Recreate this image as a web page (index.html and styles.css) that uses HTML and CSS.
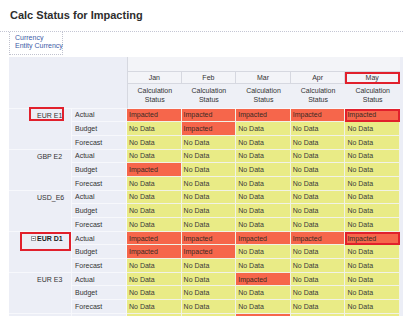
FILE: index.html
```html
<!DOCTYPE html>
<html lang="en">
<head>
  <meta charset="UTF-8">
  <meta name="viewport" content="width=device-width, initial-scale=1.0">
  <title>Calc Status for Impacting</title>
  <link rel="stylesheet" href="styles.css">
</head>
<body>
  <h1 class="page-title">Calc Status for Impacting</h1>

  <div class="pov-bar">
    <div class="pov-panel">
      <div>Currency</div>
      <div>Entity Currency</div>
    </div>
  </div>

  <div class="grid-wrap">
    <table class="grid">
      <colgroup>
        <col class="col-entity">
        <col class="col-scenario">
        <col class="col-month">
        <col class="col-month">
        <col class="col-month">
        <col class="col-month">
        <col class="col-month">
      </colgroup>
      <thead>
        <tr class="row-blank">
          <th class="corner" colspan="2" rowspan="3"></th>
          <th class="hd-blank" colspan="5"></th>
        </tr>
        <tr class="row-month">
          <th class="hd-month">Jan</th>
          <th class="hd-month">Feb</th>
          <th class="hd-month">Mar</th>
          <th class="hd-month">Apr</th>
          <th class="hd-month flagged">May</th>
        </tr>
        <tr class="row-measure">
          <th class="hd-measure">Calculation<br>Status</th>
          <th class="hd-measure">Calculation<br>Status</th>
          <th class="hd-measure">Calculation<br>Status</th>
          <th class="hd-measure">Calculation<br>Status</th>
          <th class="hd-measure">Calculation<br>Status</th>
        </tr>
      </thead>
      <tbody>
        <!-- EUR E1 -->
        <tr>
          <td class="entity" rowspan="3"><span class="entity-label mark-e1"><span class="tree-slot"></span>EUR E1</span></td>
          <td class="scenario">Actual</td>
          <td class="cell impacted">Impacted</td>
          <td class="cell impacted">Impacted</td>
          <td class="cell impacted">Impacted</td>
          <td class="cell impacted">Impacted</td>
          <td class="cell impacted flagged">Impacted</td>
        </tr>
        <tr>
          <td class="scenario">Budget</td>
          <td class="cell nodata">No Data</td>
          <td class="cell impacted">Impacted</td>
          <td class="cell nodata">No Data</td>
          <td class="cell nodata">No Data</td>
          <td class="cell nodata">No Data</td>
        </tr>
        <tr>
          <td class="scenario">Forecast</td>
          <td class="cell nodata">No Data</td>
          <td class="cell nodata">No Data</td>
          <td class="cell nodata">No Data</td>
          <td class="cell nodata">No Data</td>
          <td class="cell nodata">No Data</td>
        </tr>

        <!-- GBP E2 -->
        <tr>
          <td class="entity" rowspan="3"><span class="entity-label"><span class="tree-slot"></span>GBP E2</span></td>
          <td class="scenario">Actual</td>
          <td class="cell nodata">No Data</td>
          <td class="cell nodata">No Data</td>
          <td class="cell nodata">No Data</td>
          <td class="cell nodata">No Data</td>
          <td class="cell nodata">No Data</td>
        </tr>
        <tr>
          <td class="scenario">Budget</td>
          <td class="cell impacted">Impacted</td>
          <td class="cell nodata">No Data</td>
          <td class="cell nodata">No Data</td>
          <td class="cell nodata">No Data</td>
          <td class="cell nodata">No Data</td>
        </tr>
        <tr>
          <td class="scenario">Forecast</td>
          <td class="cell nodata">No Data</td>
          <td class="cell nodata">No Data</td>
          <td class="cell nodata">No Data</td>
          <td class="cell nodata">No Data</td>
          <td class="cell nodata">No Data</td>
        </tr>

        <!-- USD_E6 -->
        <tr>
          <td class="entity" rowspan="3"><span class="entity-label"><span class="tree-slot"></span>USD_E6</span></td>
          <td class="scenario">Actual</td>
          <td class="cell nodata">No Data</td>
          <td class="cell nodata">No Data</td>
          <td class="cell nodata">No Data</td>
          <td class="cell nodata">No Data</td>
          <td class="cell nodata">No Data</td>
        </tr>
        <tr>
          <td class="scenario">Budget</td>
          <td class="cell nodata">No Data</td>
          <td class="cell nodata">No Data</td>
          <td class="cell nodata">No Data</td>
          <td class="cell nodata">No Data</td>
          <td class="cell nodata">No Data</td>
        </tr>
        <tr>
          <td class="scenario">Forecast</td>
          <td class="cell nodata">No Data</td>
          <td class="cell nodata">No Data</td>
          <td class="cell nodata">No Data</td>
          <td class="cell nodata">No Data</td>
          <td class="cell nodata">No Data</td>
        </tr>

        <!-- EUR D1 (expanded parent) -->
        <tr>
          <td class="entity" rowspan="3"><span class="entity-label parent mark-d1"><span class="tree-slot"><svg width="5" height="5" viewBox="0 0 5 5"><rect x="0.5" y="0.5" width="4" height="4" fill="#fff" stroke="#9a9ca6"/><path d="M1.5 2.5h2" stroke="#55575f"/></svg></span>EUR D1</span></td>
          <td class="scenario">Actual</td>
          <td class="cell impacted">Impacted</td>
          <td class="cell impacted">Impacted</td>
          <td class="cell impacted">Impacted</td>
          <td class="cell impacted">Impacted</td>
          <td class="cell impacted flagged">Impacted</td>
        </tr>
        <tr>
          <td class="scenario">Budget</td>
          <td class="cell impacted">Impacted</td>
          <td class="cell impacted">Impacted</td>
          <td class="cell nodata">No Data</td>
          <td class="cell nodata">No Data</td>
          <td class="cell nodata">No Data</td>
        </tr>
        <tr>
          <td class="scenario">Forecast</td>
          <td class="cell nodata">No Data</td>
          <td class="cell nodata">No Data</td>
          <td class="cell nodata">No Data</td>
          <td class="cell nodata">No Data</td>
          <td class="cell nodata">No Data</td>
        </tr>

        <!-- EUR E3 -->
        <tr>
          <td class="entity" rowspan="3"><span class="entity-label"><span class="tree-slot"></span>EUR E3</span></td>
          <td class="scenario">Actual</td>
          <td class="cell nodata">No Data</td>
          <td class="cell nodata">No Data</td>
          <td class="cell impacted">Impacted</td>
          <td class="cell nodata">No Data</td>
          <td class="cell nodata">No Data</td>
        </tr>
        <tr>
          <td class="scenario">Budget</td>
          <td class="cell nodata">No Data</td>
          <td class="cell nodata">No Data</td>
          <td class="cell nodata">No Data</td>
          <td class="cell nodata">No Data</td>
          <td class="cell nodata">No Data</td>
        </tr>
        <tr>
          <td class="scenario">Forecast</td>
          <td class="cell nodata">No Data</td>
          <td class="cell nodata">No Data</td>
          <td class="cell nodata">No Data</td>
          <td class="cell nodata">No Data</td>
          <td class="cell nodata">No Data</td>
        </tr>

        <!-- top edge of the next row, cut off by the window -->
        <tr>
          <td class="entity"></td>
          <td class="scenario"></td>
          <td class="cell nodata"></td>
          <td class="cell nodata"></td>
          <td class="cell impacted"></td>
          <td class="cell nodata"></td>
          <td class="cell nodata"></td>
        </tr>
      </tbody>
    </table>
  </div>
</body>
</html>
```

FILE: styles.css
```css
html {
  overflow: hidden;
}
body {
  margin: 0;
  background: #fff;
  font-family: "Liberation Sans", Arial, sans-serif;
  color: #333;
}
.page-title {
  margin: 0;
  padding: 9px 0 0 10px;
  font-size: 11px;
  line-height: 13px;
  font-weight: bold;
  color: #2e2e2e;
}
.pov-bar {
  margin-top: 9px;
  height: 23px;
  padding-left: 9px;
  border-top: 1px dotted #c4c6d4;
}
.pov-panel {
  width: 47px;
  height: 20px;
  padding: 2px 0 0 5px;
  border: 1px dotted #c0c2ce;
  border-top: none;
  font-size: 7px;
  line-height: 8px;
  color: #3d5ca6;
  white-space: nowrap;
}
.grid-wrap {
  margin: 2px 0 0 9px;
  background: #eceef6;
}
.grid {
  border-collapse: separate;
  border-spacing: 0;
  table-layout: fixed;
  width: 391px;
  font-size: 7px;
}
.col-entity {
  width: 63px;
}
.col-scenario {
  width: 55px;
}
.col-month {
  width: 54.6px;
}
.grid th {
  padding: 0;
  font-weight: normal;
  color: #333;
}
.corner {
  border-bottom: 1px solid #f7f8fc;
}
.row-blank {
  height: 15px;
}
.row-month {
  height: 12px;
}
.row-measure {
  height: 24.5px;
}
.hd-blank {
  background: #f3f4f8;
  border-left: 1px solid #d6d8e0;
  border-bottom: 1px solid #d6d8e0;
}
.hd-month {
  background: #f3f4f8;
  border-right: 1px solid #d6d8e0;
  border-bottom: 1px solid #d6d8e0;
  text-align: center;
}
.hd-month:first-child {
  border-left: 1px solid #d6d8e0;
}
.hd-measure {
  background: #eef0f6;
  text-align: center;
  line-height: 8.3px;
  border-bottom: 1px solid #f7f8fc;
}
.hd-measure:first-child {
  border-left: 1px solid #d6d8e0;
}
.grid tbody tr {
  height: 13.7px;
}
.grid td {
  padding: 0;
  white-space: nowrap;
  overflow: visible;
}
.entity {
  vertical-align: top;
  padding-left: 22px !important;
  border-right: 1px solid #f7f8fc;
  border-bottom: 1px solid #f7f8fc;
}
.entity-label {
  position: relative;
  display: inline-block;
  line-height: 13.7px;
  color: #333;
}
.entity-label.parent {
  font-weight: bold;
  color: #1e1e1e;
}
.tree-slot {
  display: inline-block;
  width: 6px;
  height: 5px;
  vertical-align: 0;
}
.tree-slot svg {
  display: block;
}
.mark-e1::after,
.mark-d1::after {
  content: "";
  position: absolute;
  border: 2px solid #e1202c;
  box-sizing: border-box;
}
.mark-e1::after {
  left: -2px;
  top: -1.5px;
  width: 35px;
  height: 14px;
}
.mark-d1::after {
  left: -11px;
  top: 0.5px;
  width: 51px;
  height: 19px;
}
.scenario {
  padding-left: 3px !important;
  border-right: 1px solid #f7f8fc;
  border-bottom: 1px solid #f7f8fc;
  color: #333;
}
.cell {
  padding-left: 2px !important;
  border-right: 1px solid #f1f2e6;
  border-bottom: 1px solid #f1f2e6;
  color: #3a3a3a;
}
.nodata {
  background: #e9eb86;
}
.impacted {
  background: #f6664b;
  color: #3a2a24;
}
.flagged {
  outline: 2px solid #e1202c;
  outline-offset: -2px;
}
```
